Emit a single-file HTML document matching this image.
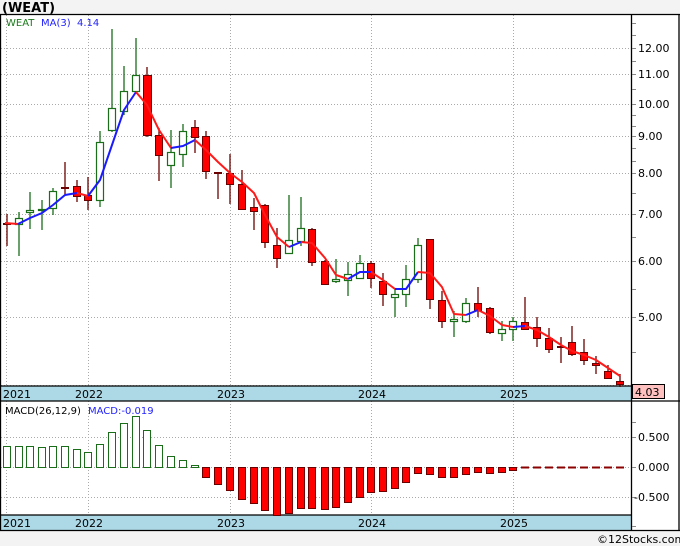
<!DOCTYPE html>
<html><head><meta charset="utf-8"><style>
body{margin:0;background:#fff;width:680px;height:546px;overflow:hidden;font-family:"DejaVu Sans","Liberation Sans",sans-serif}
svg{display:block}
</style></head><body>
<svg width="680" height="546" viewBox="0 0 680 546" xmlns="http://www.w3.org/2000/svg" font-family="DejaVu Sans, Liberation Sans, sans-serif">
<rect x="0" y="0" width="680" height="546" fill="#fff"/>
<rect x="0" y="0" width="680" height="14" fill="#f3f3f3"/>
<rect x="0" y="531" width="680" height="15" fill="#f3f3f3"/>
<text x="2" y="12" font-size="13" font-weight="bold" fill="#000">(WEAT)</text>
<!-- date strips -->
<rect x="1" y="386" width="630" height="15" fill="#add8e6"/>
<rect x="1" y="515" width="630" height="15" fill="#add8e6"/>
<!-- grid -->
<g stroke="#aaa" stroke-width="1" stroke-dasharray="1,2">
<line x1="6.5" y1="15" x2="6.5" y2="386"/><line x1="88.5" y1="15" x2="88.5" y2="386"/><line x1="230.5" y1="15" x2="230.5" y2="386"/><line x1="371.5" y1="15" x2="371.5" y2="386"/><line x1="513.5" y1="15" x2="513.5" y2="386"/>
<line x1="6.5" y1="401" x2="6.5" y2="515"/><line x1="88.5" y1="401" x2="88.5" y2="515"/><line x1="230.5" y1="401" x2="230.5" y2="515"/><line x1="371.5" y1="401" x2="371.5" y2="515"/><line x1="513.5" y1="401" x2="513.5" y2="515"/>
<line x1="1" y1="48.5" x2="631" y2="48.5"/><line x1="1" y1="74.5" x2="631" y2="74.5"/><line x1="1" y1="104.5" x2="631" y2="104.5"/><line x1="1" y1="136.5" x2="631" y2="136.5"/><line x1="1" y1="173.5" x2="631" y2="173.5"/><line x1="1" y1="214.5" x2="631" y2="214.5"/><line x1="1" y1="261.5" x2="631" y2="261.5"/><line x1="1" y1="317.5" x2="631" y2="317.5"/><line x1="1" y1="385.5" x2="631" y2="385.5"/>
<line x1="1" y1="437.5" x2="631" y2="437.5"/><line x1="1" y1="467.5" x2="631" y2="467.5"/><line x1="1" y1="497.5" x2="631" y2="497.5"/>
</g>
<!-- borders -->
<g stroke="#000" stroke-width="1.3" fill="none">
<line x1="0" y1="14.5" x2="680" y2="14.5"/>
<line x1="0.5" y1="14" x2="0.5" y2="531"/>
<line x1="679" y1="14" x2="679" y2="531"/>
<line x1="631.5" y1="14" x2="631.5" y2="531"/>
<line x1="0" y1="386" x2="631" y2="386"/>
<line x1="0" y1="401" x2="680" y2="401"/>
<line x1="0" y1="515" x2="631" y2="515"/>
<line x1="0" y1="530.5" x2="680" y2="530.5"/>
</g>
<!-- right axis ticks -->
<g stroke="#888" stroke-width="1">
<line x1="632" y1="23.5" x2="636" y2="23.5"/><line x1="632" y1="35.5" x2="636" y2="35.5"/><line x1="632" y1="48.5" x2="636" y2="48.5"/><line x1="632" y1="61.5" x2="636" y2="61.5"/><line x1="632" y1="74.5" x2="636" y2="74.5"/><line x1="632" y1="89.5" x2="636" y2="89.5"/><line x1="632" y1="104.5" x2="636" y2="104.5"/><line x1="632" y1="115.5" x2="636" y2="115.5"/><line x1="632" y1="126.5" x2="636" y2="126.5"/><line x1="632" y1="136.5" x2="636" y2="136.5"/><line x1="632" y1="148.5" x2="636" y2="148.5"/><line x1="632" y1="161.5" x2="636" y2="161.5"/><line x1="632" y1="173.5" x2="636" y2="173.5"/><line x1="632" y1="193.5" x2="636" y2="193.5"/><line x1="632" y1="214.5" x2="636" y2="214.5"/><line x1="632" y1="237.5" x2="636" y2="237.5"/><line x1="632" y1="261.5" x2="636" y2="261.5"/><line x1="632" y1="289.5" x2="636" y2="289.5"/><line x1="632" y1="317.5" x2="636" y2="317.5"/><line x1="632" y1="352.5" x2="636" y2="352.5"/><line x1="632" y1="385.5" x2="636" y2="385.5"/>
<line x1="632" y1="422.5" x2="636" y2="422.5"/><line x1="632" y1="437.5" x2="636" y2="437.5"/><line x1="632" y1="467.5" x2="636" y2="467.5"/><line x1="632" y1="497.5" x2="636" y2="497.5"/><line x1="632" y1="526.5" x2="636" y2="526.5"/>
</g>
<g font-size="11" fill="#000">
<text x="638" y="52">12.00</text><text x="638" y="78">11.00</text><text x="638" y="108">10.00</text><text x="638" y="140">9.00</text><text x="638" y="177">8.00</text><text x="638" y="218">7.00</text><text x="638" y="265">6.00</text><text x="638" y="321">5.00</text>
<text x="638" y="441">0.500</text><text x="638" y="471">0.000</text><text x="634" y="501">-0.500</text>
</g>
<rect x="632.5" y="384.5" width="32" height="14" fill="#ffc0c0" stroke="#000" stroke-width="1"/>
<text x="635" y="396" font-size="11" fill="#000">4.03</text>
<g font-size="11" fill="#000">
<text x="3" y="398">2021</text><text x="75" y="398">2022</text><text x="217" y="398">2023</text><text x="358" y="398">2024</text><text x="500" y="398">2025</text>
<text x="3" y="527">2021</text><text x="75" y="527">2022</text><text x="217" y="527">2023</text><text x="358" y="527">2024</text><text x="500" y="527">2025</text>
</g>
<text x="6" y="26" font-size="10" fill="#1a7a1a">WEAT</text>
<text x="41" y="26" font-size="10" fill="#2222ff">MA(3)</text>
<text x="77" y="26" font-size="10" fill="#2222ff">4.14</text>
<text x="5" y="414" font-size="10" fill="#000">MACD(26,12,9)</text>
<text x="88" y="414" font-size="10" fill="#2222ff">MACD:-0.019</text>
<text x="597" y="543" font-size="11" fill="#000">©12Stocks.com</text>
<!-- wicks -->
<g stroke-width="1.3">
<g stroke="#6b0000">
<line x1="7" y1="214" x2="7" y2="246"/><line x1="65" y1="162" x2="65" y2="195"/><line x1="77" y1="180" x2="77" y2="202"/><line x1="88" y1="177" x2="88" y2="210"/><line x1="147" y1="67" x2="147" y2="137"/><line x1="159" y1="128" x2="159" y2="181"/><line x1="195" y1="120" x2="195" y2="153"/><line x1="206" y1="131" x2="206" y2="179"/><line x1="218" y1="173" x2="218" y2="199"/><line x1="230" y1="154" x2="230" y2="204"/><line x1="242" y1="170" x2="242" y2="210"/><line x1="254" y1="198" x2="254" y2="230"/><line x1="265" y1="204" x2="265" y2="248"/><line x1="277" y1="228" x2="277" y2="268"/><line x1="312" y1="228" x2="312" y2="266"/><line x1="325" y1="260" x2="325" y2="285"/><line x1="371" y1="261" x2="371" y2="288"/><line x1="383" y1="273" x2="383" y2="306"/><line x1="430" y1="239" x2="430" y2="309"/><line x1="442" y1="291" x2="442" y2="328"/><line x1="478" y1="287" x2="478" y2="317"/><line x1="490" y1="307" x2="490" y2="334"/><line x1="525" y1="297" x2="525" y2="330"/><line x1="537" y1="317" x2="537" y2="347"/><line x1="549" y1="328" x2="549" y2="353"/><line x1="561" y1="337" x2="561" y2="363"/><line x1="572" y1="326" x2="572" y2="356"/><line x1="584" y1="339" x2="584" y2="365"/><line x1="596" y1="356" x2="596" y2="374"/><line x1="608" y1="365" x2="608" y2="379"/><line x1="620" y1="374" x2="620" y2="387"/>
</g>
<g stroke="#1a6e1a">
<line x1="19" y1="212" x2="19" y2="256"/><line x1="30" y1="192" x2="30" y2="229"/><line x1="42" y1="200" x2="42" y2="230"/><line x1="53" y1="188" x2="53" y2="215"/><line x1="100" y1="131" x2="100" y2="207"/><line x1="112" y1="29" x2="112" y2="132"/><line x1="124" y1="66" x2="124" y2="115"/><line x1="136" y1="38" x2="136" y2="94"/><line x1="171" y1="130" x2="171" y2="188"/><line x1="183" y1="124" x2="183" y2="167"/><line x1="289" y1="195" x2="289" y2="254"/><line x1="301" y1="197" x2="301" y2="246"/><line x1="336" y1="259" x2="336" y2="283"/><line x1="348" y1="262" x2="348" y2="296"/><line x1="360" y1="255" x2="360" y2="279"/><line x1="395" y1="289" x2="395" y2="317"/><line x1="406" y1="265" x2="406" y2="307"/><line x1="418" y1="238" x2="418" y2="283"/><line x1="454" y1="311" x2="454" y2="337"/><line x1="466" y1="298" x2="466" y2="323"/><line x1="502" y1="321" x2="502" y2="341"/><line x1="513" y1="317" x2="513" y2="341"/>
</g>
</g>
<!-- bodies -->
<g fill="#ff0000" stroke="#6b0000" stroke-width="1">
<rect x="3.5" y="223.5" width="7" height="1"/><rect x="73.5" y="186.5" width="7" height="10"/><rect x="84.5" y="195.5" width="7" height="5"/><rect x="143.5" y="75.5" width="8" height="60"/><rect x="155.5" y="135.5" width="7" height="20"/><rect x="191.5" y="127.5" width="7" height="10"/><rect x="202.5" y="136.5" width="7" height="35"/><rect x="214.5" y="172.5" width="7" height="1"/><rect x="226.5" y="173.5" width="7" height="11"/><rect x="238.5" y="184.5" width="7" height="25"/><rect x="250.5" y="207.5" width="7" height="4"/><rect x="261.5" y="205.5" width="7" height="37"/><rect x="273.5" y="245.5" width="7" height="13"/><rect x="308.5" y="229.5" width="7" height="33"/><rect x="321.5" y="261.5" width="7" height="23"/><rect x="367.5" y="263.5" width="7" height="15"/><rect x="379.5" y="281.5" width="7" height="13"/><rect x="426.5" y="239.5" width="7" height="60"/><rect x="438.5" y="300.5" width="7" height="21"/><rect x="474.5" y="303.5" width="7" height="7"/><rect x="486.5" y="308.5" width="7" height="24"/><rect x="521.5" y="322.5" width="7" height="7"/><rect x="533.5" y="327.5" width="7" height="11"/><rect x="545.5" y="338.5" width="7" height="11"/><rect x="557.5" y="346.5" width="7" height="1"/><rect x="568.5" y="342.5" width="7" height="12"/><rect x="580.5" y="352.5" width="7" height="8"/><rect x="592.5" y="363.5" width="7" height="2"/><rect x="604.5" y="371.5" width="7" height="7"/><rect x="616.5" y="381.5" width="7" height="3"/>
<rect x="61.5" y="187.5" width="7" height="1"/>
</g>
<g fill="#fff" stroke="#1a6e1a" stroke-width="1.2">
<rect x="15.5" y="218.5" width="7" height="6"/><rect x="26.5" y="210.5" width="7" height="2"/><rect x="38.5" y="209.5" width="7" height="1"/><rect x="49.5" y="191.5" width="7" height="17"/><rect x="96.5" y="142.5" width="7" height="58"/><rect x="108.5" y="108.5" width="7" height="22"/><rect x="120.5" y="91.5" width="7" height="20"/><rect x="132.5" y="75.5" width="7" height="16"/><rect x="167.5" y="152.5" width="7" height="13"/><rect x="179.5" y="131.5" width="7" height="23"/><rect x="285.5" y="240.5" width="7" height="13"/><rect x="297.5" y="228.5" width="7" height="13"/><rect x="332.5" y="279.5" width="7" height="2"/><rect x="344.5" y="274.5" width="7" height="6"/><rect x="356.5" y="263.5" width="7" height="15"/><rect x="391.5" y="294.5" width="7" height="3"/><rect x="402.5" y="279.5" width="7" height="15"/><rect x="414.5" y="245.5" width="7" height="34"/><rect x="450.5" y="319.5" width="7" height="2"/><rect x="462.5" y="303.5" width="7" height="18"/><rect x="498.5" y="329.5" width="7" height="4"/><rect x="509.5" y="321.5" width="7" height="8"/>
</g>
<!-- MA -->
<g fill="none" stroke-width="2" stroke-linejoin="round">
<polyline stroke="#ff1a1a" points="5,223 18,224"/>
<polyline stroke="#1a1aff" points="18,224 30,218 42,213 53,205 65,195 77,193"/>
<polyline stroke="#ff1a1a" points="77,193 88,196"/>
<polyline stroke="#1a1aff" points="88,196 100,180 112,145 124,110 136,92"/>
<polyline stroke="#ff1a1a" points="136,92 147,105 159,130 171,148"/>
<polyline stroke="#1a1aff" points="171,148 183,146 195,140"/>
<polyline stroke="#ff1a1a" points="195,140 206,150 218,162 230,173 242,182 254,193 265,215 277,237 289,247"/>
<polyline stroke="#1a1aff" points="289,247 301,242"/>
<polyline stroke="#ff1a1a" points="301,242 312,243 325,258 336,275 348,279"/>
<polyline stroke="#1a1aff" points="348,279 360,272 371,272"/>
<polyline stroke="#ff1a1a" points="371,272 383,280 395,289"/>
<polyline stroke="#1a1aff" points="395,289 406,289 418,272"/>
<polyline stroke="#ff1a1a" points="418,272 430,273 442,287 454,314 466,315"/>
<polyline stroke="#1a1aff" points="466,315 478,310"/>
<polyline stroke="#ff1a1a" points="478,310 490,316 502,325 513,327"/>
<polyline stroke="#1a1aff" points="513,327 525,326"/>
<polyline stroke="#ff1a1a" points="525,326 537,330 549,337 561,345 572,351 584,355 596,360 608,368 620,376"/>
</g>
<!-- MACD bars -->
<g fill="#fff" stroke="#1a6e1a" stroke-width="1">
<rect x="3.5" y="446.5" width="7" height="21"/><rect x="15.5" y="446.5" width="7" height="21"/><rect x="26.5" y="446.5" width="7" height="21"/><rect x="38.5" y="447.5" width="7" height="20"/><rect x="49.5" y="446.5" width="7" height="21"/><rect x="61.5" y="446.5" width="7" height="21"/><rect x="73.5" y="449.5" width="7" height="18"/><rect x="84.5" y="452.5" width="7" height="15"/><rect x="96.5" y="444.5" width="7" height="23"/><rect x="108.5" y="432.5" width="7" height="35"/><rect x="120.5" y="423.5" width="7" height="44"/><rect x="132.5" y="416.5" width="7" height="51"/><rect x="143.5" y="430.5" width="7" height="37"/><rect x="155.5" y="445.5" width="7" height="22"/><rect x="167.5" y="456.5" width="7" height="11"/><rect x="179.5" y="460.5" width="7" height="7"/><rect x="191.5" y="465.5" width="7" height="2"/>
</g>
<g fill="#ff0000" stroke="#6b0000" stroke-width="1">
<rect x="202.5" y="467.5" width="7" height="10"/><rect x="214.5" y="467.5" width="7" height="17"/><rect x="226.5" y="467.5" width="7" height="23"/><rect x="238.5" y="467.5" width="7" height="32"/><rect x="250.5" y="467.5" width="7" height="36"/><rect x="261.5" y="467.5" width="7" height="43"/><rect x="273.5" y="467.5" width="7" height="48"/><rect x="285.5" y="467.5" width="7" height="46"/><rect x="297.5" y="467.5" width="7" height="41"/><rect x="308.5" y="467.5" width="7" height="41"/><rect x="321.5" y="467.5" width="7" height="42"/><rect x="332.5" y="467.5" width="7" height="40"/><rect x="344.5" y="467.5" width="7" height="35"/><rect x="356.5" y="467.5" width="7" height="30"/><rect x="367.5" y="467.5" width="7" height="25"/><rect x="379.5" y="467.5" width="7" height="24"/><rect x="391.5" y="467.5" width="7" height="21"/><rect x="402.5" y="467.5" width="7" height="15"/><rect x="414.5" y="467.5" width="7" height="6"/><rect x="426.5" y="467.5" width="7" height="7"/><rect x="438.5" y="467.5" width="7" height="10"/><rect x="450.5" y="467.5" width="7" height="10"/><rect x="462.5" y="467.5" width="7" height="7"/><rect x="474.5" y="467.5" width="7" height="5"/><rect x="486.5" y="467.5" width="7" height="6"/><rect x="498.5" y="467.5" width="7" height="5"/><rect x="509.5" y="467.5" width="7" height="3"/>
</g>
<g stroke="#8b0000" stroke-width="2">
<line x1="521" y1="467.5" x2="529" y2="467.5"/><line x1="533" y1="467.5" x2="541" y2="467.5"/><line x1="545" y1="467.5" x2="553" y2="467.5"/><line x1="557" y1="467.5" x2="565" y2="467.5"/><line x1="568" y1="467.5" x2="576" y2="467.5"/><line x1="580" y1="467.5" x2="588" y2="467.5"/><line x1="592" y1="467.5" x2="600" y2="467.5"/><line x1="604" y1="467.5" x2="612" y2="467.5"/><line x1="616" y1="467.5" x2="624" y2="467.5"/>
</g>
</svg>
</body></html>
